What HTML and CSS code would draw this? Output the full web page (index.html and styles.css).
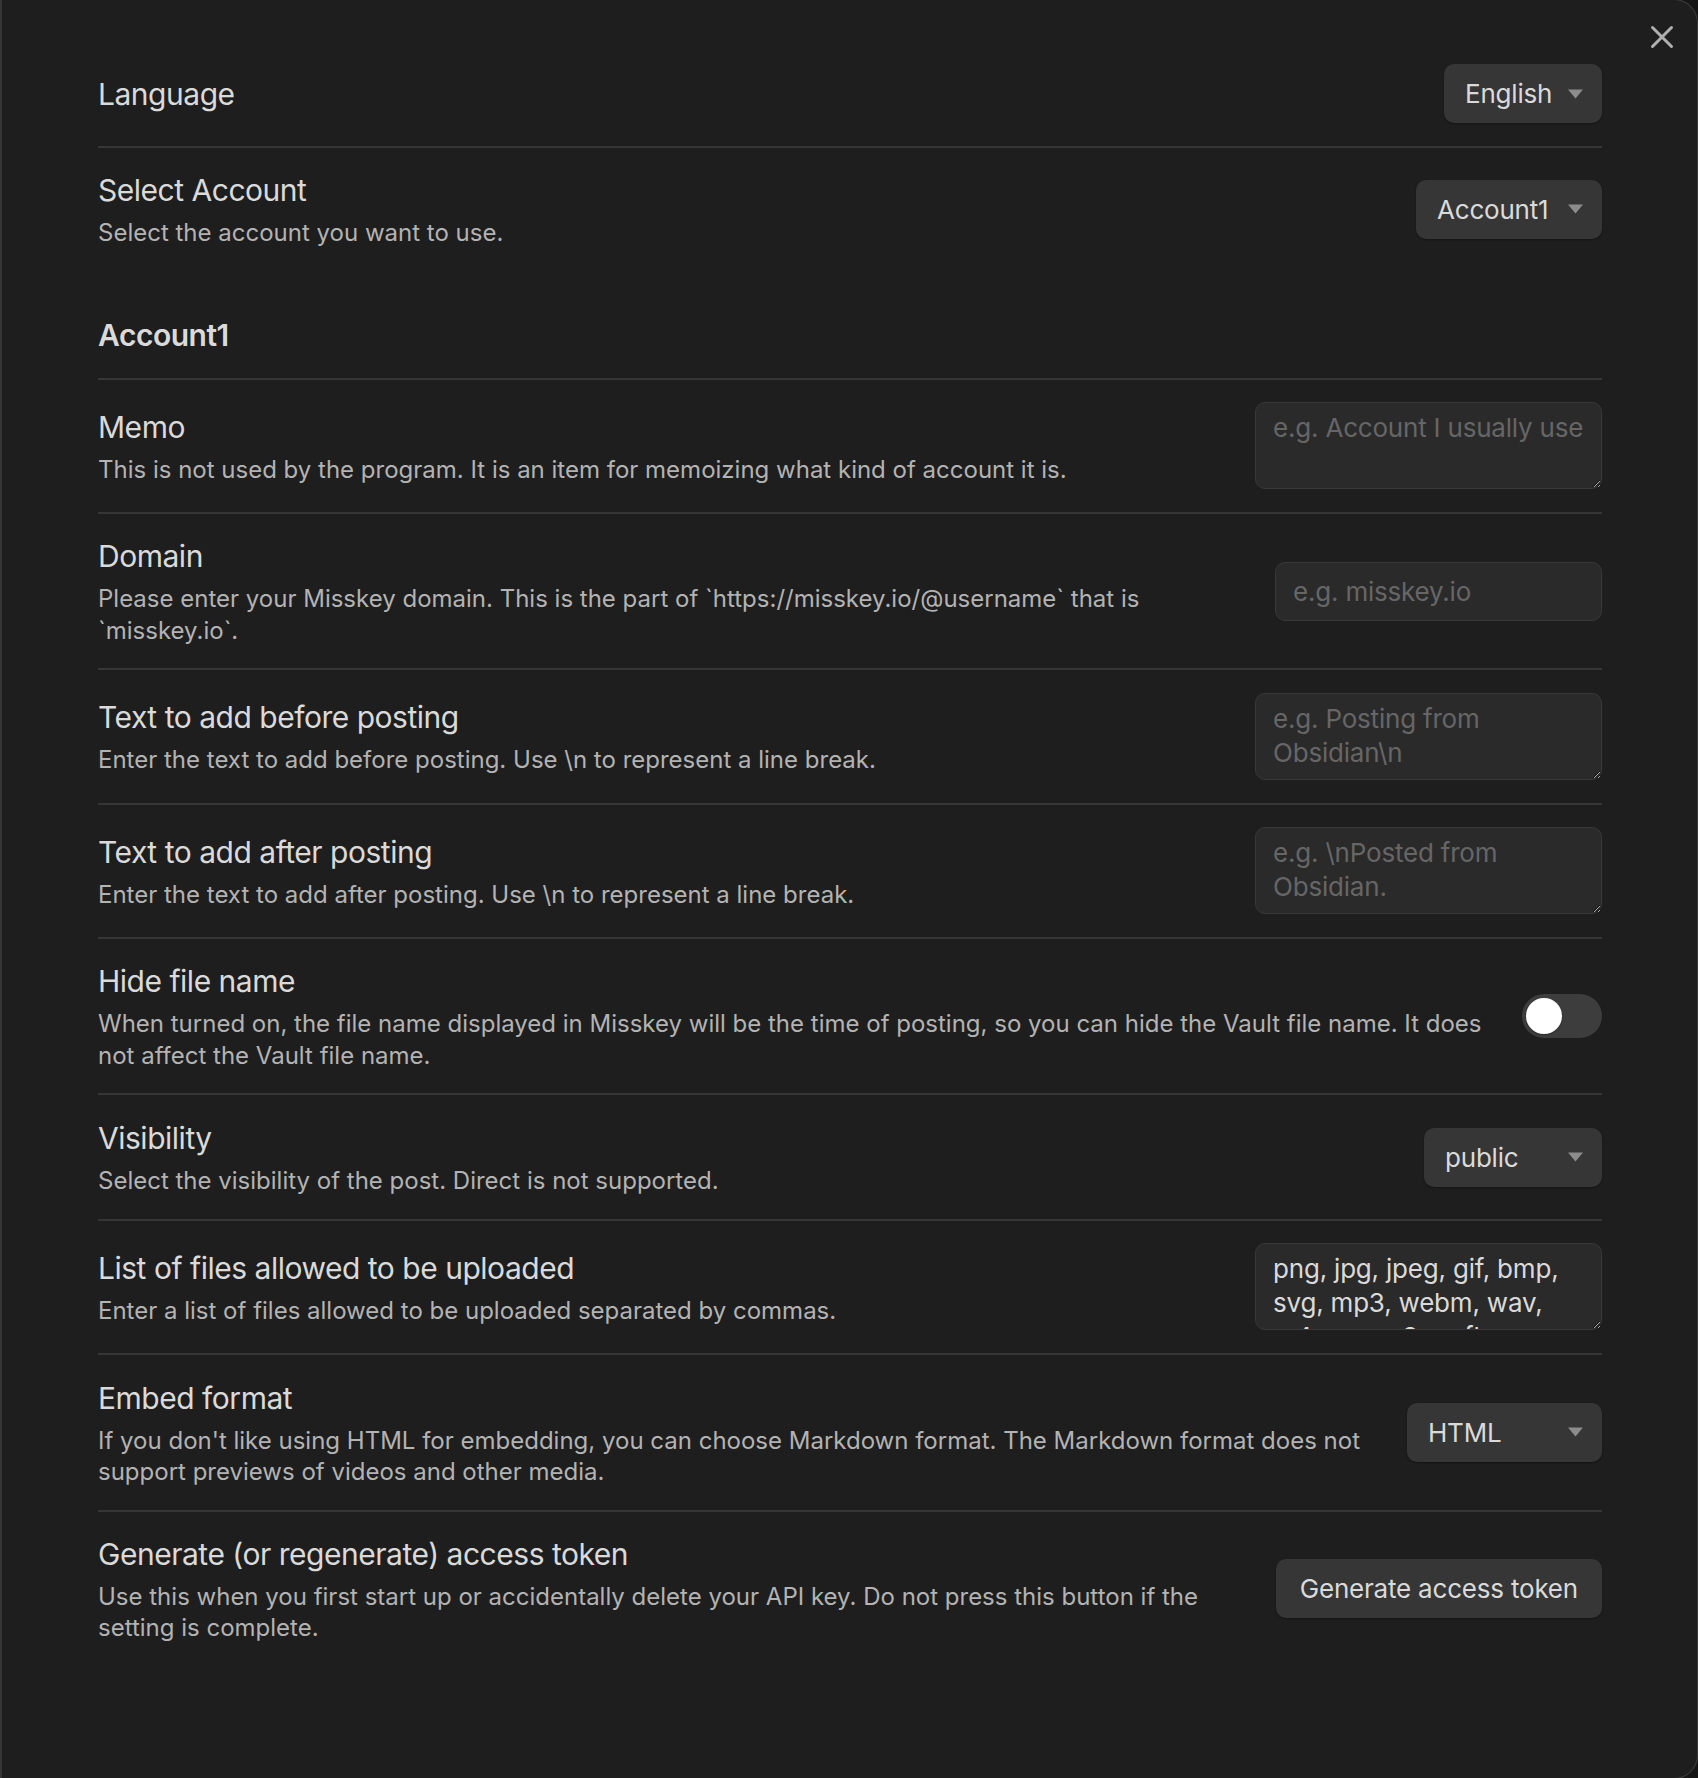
FILE: index.html
```html
<!DOCTYPE html>
<html lang="en">
<head>
<meta charset="utf-8">
<title>Misskey settings</title>
<link rel="stylesheet" href="styles.css">
</head>
<body>
<div class="modal">
  <button class="close" aria-label="Close">
    <svg width="24" height="24" viewBox="0 0 24 24"><path d="M2.5 2.5 L21.5 21.5 M21.5 2.5 L2.5 21.5" stroke="#b0b0b0" stroke-width="3" stroke-linecap="round" fill="none"/></svg>
  </button>
  <div class="content">
    <div class="item first">
      <div class="info"><div class="name">Language</div></div>
      <div class="control">
        <div class="dropdown dd-lang"><span>English</span><svg class="arrow" width="17" height="10" viewBox="0 0 17 10"><path d="M1 0.5 H16 L8.5 9.5 Z" fill="#8c8c8c"/></svg></div>
      </div>
    </div>

    <div class="item">
      <div class="info">
        <div class="name">Select Account</div>
        <div class="desc">Select the account you want to use.</div>
      </div>
      <div class="control">
        <div class="dropdown dd-account"><span>Account1</span><svg class="arrow" width="17" height="10" viewBox="0 0 17 10"><path d="M1 0.5 H16 L8.5 9.5 Z" fill="#8c8c8c"/></svg></div>
      </div>
    </div>

    <div class="item heading">
      <div class="info"><div class="name">Account1</div></div>
    </div>

    <div class="item">
      <div class="info">
        <div class="name">Memo</div>
        <div class="desc">This is not used by the program. It is an item for memoizing what kind of account it is.</div>
      </div>
      <div class="control">
        <textarea class="textarea" placeholder="e.g. Account I usually use"></textarea>
      </div>
    </div>

    <div class="item">
      <div class="info">
        <div class="name">Domain</div>
        <div class="desc">Please enter your Misskey domain. This is the part of `https://misskey.io/@username` that is `misskey.io`.</div>
      </div>
      <div class="control">
        <input class="input" type="text" placeholder="e.g. misskey.io">
      </div>
    </div>

    <div class="item">
      <div class="info">
        <div class="name">Text to add before posting</div>
        <div class="desc">Enter the text to add before posting. Use \n to represent a line break.</div>
      </div>
      <div class="control">
        <textarea class="textarea" placeholder="e.g. Posting from Obsidian\n"></textarea>
      </div>
    </div>

    <div class="item">
      <div class="info">
        <div class="name">Text to add after posting</div>
        <div class="desc">Enter the text to add after posting. Use \n to represent a line break.</div>
      </div>
      <div class="control">
        <textarea class="textarea" placeholder="e.g. \nPosted from Obsidian."></textarea>
      </div>
    </div>

    <div class="item">
      <div class="info">
        <div class="name">Hide file name</div>
        <div class="desc">When turned on, the file name displayed in Misskey will be the time of posting, so you can hide the Vault file name. It does not affect the Vault file name.</div>
      </div>
      <div class="control">
        <div class="toggle"><div class="knob"></div></div>
      </div>
    </div>

    <div class="item">
      <div class="info">
        <div class="name">Visibility</div>
        <div class="desc">Select the visibility of the post. Direct is not supported.</div>
      </div>
      <div class="control">
        <div class="dropdown dd-vis"><span>public</span><svg class="arrow" width="17" height="10" viewBox="0 0 17 10"><path d="M1 0.5 H16 L8.5 9.5 Z" fill="#8c8c8c"/></svg></div>
      </div>
    </div>

    <div class="item">
      <div class="info">
        <div class="name">List of files allowed to be uploaded</div>
        <div class="desc">Enter a list of files allowed to be uploaded separated by commas.</div>
      </div>
      <div class="control">
        <textarea class="textarea">png, jpg, jpeg, gif, bmp, svg, mp3, webm, wav, m4a, ogg, 3gp, flac, mp4, mov, avi</textarea>
      </div>
    </div>

    <div class="item">
      <div class="info">
        <div class="name">Embed format</div>
        <div class="desc">If you don't like using HTML for embedding, you can choose Markdown format. The Markdown format does not support previews of videos and other media.</div>
      </div>
      <div class="control">
        <div class="dropdown dd-embed"><span>HTML</span><svg class="arrow" width="17" height="10" viewBox="0 0 17 10"><path d="M1 0.5 H16 L8.5 9.5 Z" fill="#8c8c8c"/></svg></div>
      </div>
    </div>

    <div class="item">
      <div class="info">
        <div class="name">Generate (or regenerate) access token</div>
        <div class="desc">Use this when you first start up or accidentally delete your API key. Do not press this button if the setting is complete.</div>
      </div>
      <div class="control">
        <button class="button">Generate access token</button>
      </div>
    </div>
  </div>
</div>
</body>
</html>
```

FILE: styles.css
```css
html, body {
  margin: 0;
  padding: 0;
}

body {
  width: 1698px;
  height: 1778px;
  overflow: hidden;
  background: #151515;
  font-family: Inter, "Noto Sans", sans-serif;
  color: #dadada;
}

.modal {
  position: relative;
  box-sizing: border-box;
  width: 1698px;
  height: 1780px;
  margin-top: -1px;
  background: #1e1e1e;
  border: 1px solid #3c3c3c;
  border-left: none;
  border-radius: 0 24px 24px 0;
  display: flex;
}

.close {
  position: absolute;
  top: 25px;
  right: 23px;
  width: 24px;
  height: 24px;
  padding: 0;
  border: none;
  background: transparent;
  display: flex;
  align-items: center;
  justify-content: center;
}

.content {
  flex: 1;
  border-left: 2px solid #363636;
  padding: 64px 95px 0 96px;
  display: flex;
  flex-direction: column;
}

.item {
  display: flex;
  align-items: center;
  padding: 22.6px 0;
  border-top: 2px solid #363636;
}

.item.first {
  border-top: none;
  padding-top: 0;
}

.item.heading {
  border-top: none;
  padding-top: 44px;
}

.info {
  flex: 1 1 auto;
  min-width: 0;
  margin-right: 32px;
}

.name {
  font-size: 30px;
  line-height: 39px;
  color: #dadada;
  letter-spacing: -0.48px;
  padding-top: 1px;
}

.heading .name {
  font-weight: 600;
}

.desc {
  padding-top: 7px;
  font-size: 24px;
  line-height: 31.2px;
  color: #b3b3b3;
  letter-spacing: 0;
}

.control {
  flex: 0 0 auto;
  display: flex;
  justify-content: flex-end;
  align-items: center;
}

.dropdown {
  box-sizing: border-box;
  height: 59px;
  display: flex;
  align-items: center;
  justify-content: space-between;
  padding: 0 18px 0 21px;
  background: #363636;
  border-radius: 10px;
  box-shadow: 0 1px 2px rgba(0, 0, 0, 0.35);
  font-size: 26px;
  color: #dadada;
  letter-spacing: -0.2px;
}

.dropdown .arrow {
  flex: 0 0 auto;
}

.dd-lang { width: 158px; }
.dd-account { width: 186px; }
.dd-vis { width: 178px; }
.dd-embed { width: 195px; }

.textarea {
  box-sizing: border-box;
  width: 347px;
  height: 87px;
  margin: 0;
  padding: 8px 17px 6px;
  background: #2a2a2a;
  border: 1px solid #383838;
  border-radius: 10px;
  font-family: Inter, "Noto Sans", sans-serif;
  font-size: 26px;
  line-height: 33.8px;
  letter-spacing: -0.2px;
  color: #dadada;
  resize: both;
  outline: none;
  overflow: hidden;
  display: block;
  color-scheme: dark;
}

.input {
  box-sizing: border-box;
  width: 327px;
  height: 59px;
  margin: 0;
  padding: 0 17px;
  background: #2a2a2a;
  border: 1px solid #383838;
  border-radius: 10px;
  font-family: Inter, "Noto Sans", sans-serif;
  font-size: 26px;
  letter-spacing: -0.2px;
  color: #dadada;
  outline: none;
  display: block;
}

.textarea::placeholder,
.input::placeholder {
  color: #666666;
}

.toggle {
  box-sizing: border-box;
  width: 80px;
  height: 44px;
  padding: 4px;
  border-radius: 22px;
  background: #3d3d3d;
  display: flex;
  align-items: center;
}

.knob {
  width: 36px;
  height: 36px;
  border-radius: 50%;
  background: #ffffff;
  box-shadow: 0 1px 2px rgba(0, 0, 0, 0.3);
}

.button {
  box-sizing: border-box;
  height: 59px;
  padding: 0 24px;
  margin: 0;
  background: #363636;
  border: none;
  border-radius: 10px;
  box-shadow: 0 1px 2px rgba(0, 0, 0, 0.35);
  font-family: Inter, "Noto Sans", sans-serif;
  font-size: 26px;
  letter-spacing: -0.2px;
  color: #dadada;
}
```
